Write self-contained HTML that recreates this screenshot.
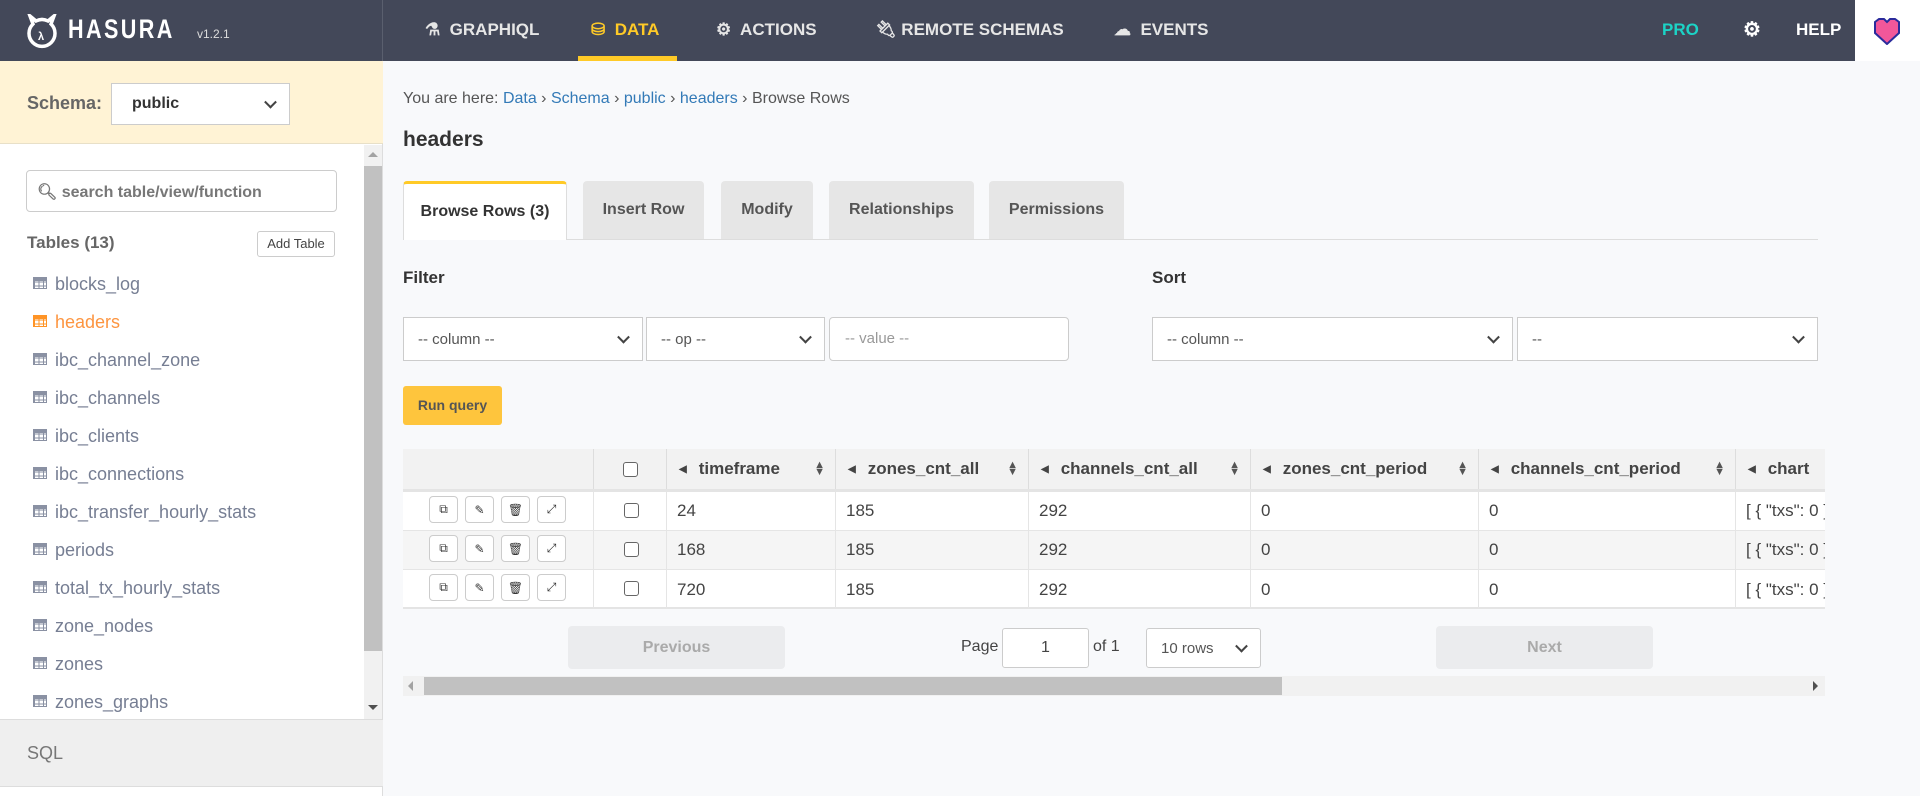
<!DOCTYPE html>
<html><head><meta charset="utf-8"><style>
*{box-sizing:border-box;margin:0;padding:0}
body{width:1920px;height:796px;overflow:hidden;background:#f8f9fb;font-family:"Liberation Sans",sans-serif;color:#333;position:relative}
.a{position:absolute}
.nav{left:0;top:0;width:1920px;height:61px;background:#434859}
.nt{color:#e6e6e6;font-weight:bold;font-size:17px;top:20px}
.side{left:0;top:61px;width:383px;height:735px;background:#fff;border-right:1px solid #ddd}
.li{left:33px;font-size:18px;color:#767e93;white-space:nowrap}
.li i{display:inline-block;width:14px;height:12px;margin-right:8px;vertical-align:1px;background:
linear-gradient(#8a91a3,#8a91a3) 0 0/14px 3px no-repeat,
repeating-linear-gradient(90deg,#8a91a3 0 1px,transparent 1px 4.5px),
repeating-linear-gradient(#8a91a3 0 1px,transparent 1px 3.7px);border:1px solid #8a91a3}
.sel{background:#fff;border:1px solid #ccc;font-size:15px;color:#555;padding-left:14px;display:flex;align-items:center}
.sel:after{content:"";position:absolute;right:14px;top:50%;width:7px;height:7px;border-right:2px solid #444;border-bottom:2px solid #444;transform:translateY(-70%) rotate(45deg)}
.tab{top:181px;height:58px;background:#e6e6e6;border-radius:4px 4px 0 0;font-size:16px;font-weight:bold;color:#555;display:flex;align-items:center;justify-content:center}
.th{top:449px;height:40px;font-size:17px;font-weight:bold;color:#444;background:#f2f2f2;border-right:1px solid #ddd;padding-left:12px;display:flex;align-items:center;white-space:nowrap;overflow:hidden}
.th b{font-size:10px;margin-right:12px;color:#444}
.th s{position:absolute;right:10px;text-decoration:none;font-size:11px;line-height:7px;color:#555}
.td{height:39px;font-size:17px;color:#444;border-right:1px solid #e5e5e5;border-bottom:1px solid #e5e5e5;padding-left:10px;display:flex;align-items:center;white-space:nowrap;overflow:hidden}
.btn{width:29px;height:27px;border:1px solid #ccc;border-radius:4px;background:#fff;font-size:12px;display:flex;align-items:center;justify-content:center;color:#333}
.cb{width:15px;height:15px;border:1px solid #666;border-radius:3px;background:#fff}
.pg{height:43px;background:#ebecee;border-radius:4px;color:#aaa;font-size:16px;font-weight:bold;display:flex;align-items:center;justify-content:center}
</style></head><body>
<div class="a nav"></div>
<div class="a" style="left:382px;top:0;width:1px;height:61px;background:#5a5f6e"></div>
<svg class="a" style="left:26px;top:14px" width="32" height="36" viewBox="0 0 32 36"><path d="M4 2 L7 10 A13 13 0 1 0 25 10 L28 2 L22 7 A13 13 0 0 0 10 7 Z" fill="none" stroke="#fff" stroke-width="3.5"/><text x="12" y="26" fill="#fff" font-size="11" font-weight="bold" font-family="Liberation Sans">λ</text></svg>
<div class="a" style="left:68px;top:14px;color:#fff;font-weight:bold;font-size:27px;letter-spacing:3px;transform:scaleX(.8);transform-origin:left">HASURA</div>
<div class="a" style="left:197px;top:27px;color:#ddd;font-size:12px">v1.2.1</div>
<div class="a" style="left:578px;top:56px;width:99px;height:5px;background:#ffca27"></div>
<div class="a nt" style="left:425px">⚗&nbsp; GRAPHIQL</div>
<div class="a nt" style="left:591px;color:#ffca27">⛁&nbsp; DATA</div>
<div class="a nt" style="left:716px">⚙&nbsp; ACTIONS</div>
<div class="a nt" style="left:875px">🔌︎ REMOTE SCHEMAS</div>
<div class="a nt" style="left:1114px">☁&nbsp; EVENTS</div>
<div class="a nt" style="left:1662px;color:#1cd3c6">PRO</div>
<div class="a nt" style="left:1743px;color:#fff;font-size:20px;top:17px">⚙</div>
<div class="a nt" style="left:1796px;color:#fff">HELP</div>
<div class="a" style="left:1855px;top:0;width:65px;height:61px;background:#fff"></div>
<svg class="a" style="left:1873px;top:18px" width="28" height="27" viewBox="0 0 28 27"><path d="M2 4 L6 1 L11 1 L14 4 L17 1 L22 1 L26 4 L26 15 L14 26 L2 15 Z" fill="#f2579a" stroke="#2b2b9c" stroke-width="2"/></svg>

<div class="a side"></div>
<div class="a" style="left:0;top:61px;width:383px;height:83px;background:#fff3d5;border-bottom:1px solid #e8e0c8"></div>
<div class="a" style="left:27px;top:93px;font-size:18px;font-weight:bold;color:#666">Schema:</div>
<div class="a sel" style="left:111px;top:83px;width:179px;height:42px;font-weight:bold;font-size:16px;color:#333;padding-left:20px">public</div>
<div class="a" style="left:364px;top:145px;width:18px;height:574px;background:#f1f1f1"></div>
<div class="a" style="left:364px;top:166px;width:18px;height:485px;background:#c1c1c1"></div>
<div class="a" style="left:368px;top:152px;border:5px solid transparent;border-bottom:5px solid #a3a3a3;border-top:0"></div>
<div class="a" style="left:368px;top:705px;border:5px solid transparent;border-top:5px solid #505050;border-bottom:0"></div>
<div class="a" style="left:26px;top:170px;width:311px;height:42px;border:1px solid #ccc;border-radius:4px;background:#fff;font-size:16px;font-weight:bold;color:#777;padding:11px 0 0 10px">&#x1F50D;&#xFE0E; search table/view/function</div>
<div class="a" style="left:27px;top:233px;font-size:17px;font-weight:bold;color:#666">Tables (13)</div>
<div class="a" style="left:257px;top:231px;width:78px;height:26px;border:1px solid #ccc;border-radius:3px;background:#fff;font-size:13px;color:#444;text-align:center;line-height:24px">Add Table</div>
<div class="a li" style="top:274px"><i></i>blocks_log</div>
<div class="a li" style="top:312px;color:#fd9540"><i style="filter:sepia(1) saturate(5) hue-rotate(-20deg)"></i>headers</div>
<div class="a li" style="top:350px"><i></i>ibc_channel_zone</div>
<div class="a li" style="top:388px"><i></i>ibc_channels</div>
<div class="a li" style="top:426px"><i></i>ibc_clients</div>
<div class="a li" style="top:464px"><i></i>ibc_connections</div>
<div class="a li" style="top:502px"><i></i>ibc_transfer_hourly_stats</div>
<div class="a li" style="top:540px"><i></i>periods</div>
<div class="a li" style="top:578px"><i></i>total_tx_hourly_stats</div>
<div class="a li" style="top:616px"><i></i>zone_nodes</div>
<div class="a li" style="top:654px"><i></i>zones</div>
<div class="a li" style="top:692px"><i></i>zones_graphs</div>
<div class="a" style="left:0;top:719px;width:383px;height:68px;background:#efefef;border-top:1px solid #ddd;border-bottom:1px solid #ddd"></div>
<div class="a" style="left:27px;top:743px;font-size:18px;color:#777">SQL</div>

<div class="a" style="left:403px;top:90px;font-size:16px;color:#555">You are here: <span style="color:#337ab7">Data</span> › <span style="color:#337ab7">Schema</span> › <span style="color:#337ab7">public</span> › <span style="color:#337ab7">headers</span> › Browse Rows</div>
<div class="a" style="left:403px;top:128px;font-size:21px;font-weight:bold;color:#333">headers</div>
<div class="a" style="left:403px;top:239px;width:1415px;height:1px;background:#ddd"></div>
<div class="a tab" style="left:403px;width:164px;background:#fff;border-top:3px solid #ffca27;height:59px;color:#333;border-left:1px solid #ddd;border-right:1px solid #ddd">Browse Rows (3)</div>
<div class="a tab" style="left:583px;width:121px">Insert Row</div>
<div class="a tab" style="left:721px;width:92px">Modify</div>
<div class="a tab" style="left:829px;width:145px">Relationships</div>
<div class="a tab" style="left:989px;width:135px">Permissions</div>
<div class="a" style="left:403px;top:268px;font-size:17px;font-weight:bold;color:#333">Filter</div>
<div class="a" style="left:1152px;top:268px;font-size:17px;font-weight:bold;color:#333">Sort</div>
<div class="a sel" style="left:403px;top:317px;width:240px;height:44px">-- column --</div>
<div class="a sel" style="left:646px;top:317px;width:179px;height:44px">-- op --</div>
<div class="a" style="left:829px;top:317px;width:240px;height:44px;border:1px solid #ccc;border-radius:4px;background:#fff;font-size:15px;color:#999;padding:12px 0 0 15px">-- value --</div>
<div class="a sel" style="left:1152px;top:317px;width:361px;height:44px">-- column --</div>
<div class="a sel" style="left:1517px;top:317px;width:301px;height:44px">--</div>
<div class="a" style="left:403px;top:386px;width:99px;height:39px;background:#fec53d;border-radius:3px;font-size:14px;font-weight:bold;color:#555;text-align:center;line-height:39px">Run query</div>

<div class="a" style="left:403px;top:449px;width:1422px;height:158px;background:#fff;overflow:hidden">
</div>
<div class="a" style="left:403px;top:449px;width:1422px;height:160px;overflow:hidden">
<div class="a th" style="left:0;top:0;width:191px"></div>
<div class="a th" style="left:191px;top:0;width:73px;justify-content:center;padding:0"><div class="cb"></div></div>
<div class="a th" style="left:264px;top:0;width:169px"><b>◀</b>timeframe<s>▲<br>▼</s></div>
<div class="a th" style="left:433px;top:0;width:193px"><b>◀</b>zones_cnt_all<s>▲<br>▼</s></div>
<div class="a th" style="left:626px;top:0;width:222px"><b>◀</b>channels_cnt_all<s>▲<br>▼</s></div>
<div class="a th" style="left:848px;top:0;width:228px"><b>◀</b>zones_cnt_period<s>▲<br>▼</s></div>
<div class="a th" style="left:1076px;top:0;width:257px"><b>◀</b>channels_cnt_period<s>▲<br>▼</s></div>
<div class="a th" style="left:1333px;top:0;width:100px;border:0"><b>◀</b>chart</div>
<div class="a" style="left:0;top:40px;width:1422px;height:3px;background:#e4e4e4"></div>
</div>
<div class="a" style="left:403px;top:492px;width:1422px;height:117px;overflow:hidden">
<div class="a" style="left:0;top:39px;width:1422px;height:39px;background:#f5f5f5"></div>
<div class="a" style="left:0;top:115px;width:1422px;height:3px;background:#e4e4e4"></div>
</div>
<div class="a" style="left:403px;top:492px;width:1422px;height:117px;overflow:hidden">
<div class="a td" style="left:0;top:0;width:191px"></div><div class="a td" style="left:191px;top:0;width:73px"></div><div class="a td" style="left:264px;top:0;width:169px">24</div><div class="a td" style="left:433px;top:0;width:193px">185</div><div class="a td" style="left:626px;top:0;width:222px">292</div><div class="a td" style="left:848px;top:0;width:228px">0</div><div class="a td" style="left:1076px;top:0;width:257px">0</div><div class="a td" style="left:1333px;top:0;width:100px;border-right:0">[ { "txs": 0 }</div>
<div class="a td" style="left:0;top:39px;width:191px"></div><div class="a td" style="left:191px;top:39px;width:73px"></div><div class="a td" style="left:264px;top:39px;width:169px">168</div><div class="a td" style="left:433px;top:39px;width:193px">185</div><div class="a td" style="left:626px;top:39px;width:222px">292</div><div class="a td" style="left:848px;top:39px;width:228px">0</div><div class="a td" style="left:1076px;top:39px;width:257px">0</div><div class="a td" style="left:1333px;top:39px;width:100px;border-right:0">[ { "txs": 0 }</div>
<div class="a td" style="left:0;top:78px;width:191px;border-bottom:0"></div><div class="a td" style="left:191px;top:78px;width:73px;border-bottom:0"></div><div class="a td" style="left:264px;top:78px;width:169px;border-bottom:0">720</div><div class="a td" style="left:433px;top:78px;width:193px;border-bottom:0">185</div><div class="a td" style="left:626px;top:78px;width:222px;border-bottom:0">292</div><div class="a td" style="left:848px;top:78px;width:228px;border-bottom:0">0</div><div class="a td" style="left:1076px;top:78px;width:257px;border-bottom:0">0</div><div class="a td" style="left:1333px;top:78px;width:100px;border:0">[ { "txs": 0 }</div>
</div>
<div class="a" style="left:429px;top:496px;display:flex;flex-direction:column;gap:12px">
<div style="display:flex;gap:7px"><div class="btn">⧉</div><div class="btn">✎</div><div class="btn">🗑︎</div><div class="btn">⤢</div></div>
<div style="display:flex;gap:7px"><div class="btn">⧉</div><div class="btn">✎</div><div class="btn">🗑︎</div><div class="btn">⤢</div></div>
<div style="display:flex;gap:7px"><div class="btn">⧉</div><div class="btn">✎</div><div class="btn">🗑︎</div><div class="btn">⤢</div></div>
</div>
<div class="a cb" style="left:624px;top:503px"></div>
<div class="a cb" style="left:624px;top:542px"></div>
<div class="a cb" style="left:624px;top:581px"></div>

<div class="a pg" style="left:568px;top:626px;width:217px">Previous</div>
<div class="a" style="left:961px;top:638px;font-size:16px;color:#444">Page</div>
<div class="a" style="left:1002px;top:628px;width:87px;height:40px;background:#fff;border:1px solid #ccc;border-radius:3px;font-size:16px;text-align:center;line-height:38px;color:#444">1</div>
<div class="a" style="left:1093px;top:638px;font-size:16px;color:#444">of 1</div>
<div class="a sel" style="left:1146px;top:628px;width:115px;height:40px;border-radius:3px">10 rows</div>
<div class="a pg" style="left:1436px;top:626px;width:217px">Next</div>
<div class="a" style="left:403px;top:676px;width:1422px;height:20px;background:#f1f1f1"></div>
<div class="a" style="left:424px;top:677px;width:858px;height:18px;background:#c1c1c1"></div>
<div class="a" style="left:408px;top:681px;border:5px solid transparent;border-right:5px solid #a3a3a3;border-left:0"></div>
<div class="a" style="left:1813px;top:681px;border:5px solid transparent;border-left:5px solid #505050;border-right:0"></div>
</body></html>
